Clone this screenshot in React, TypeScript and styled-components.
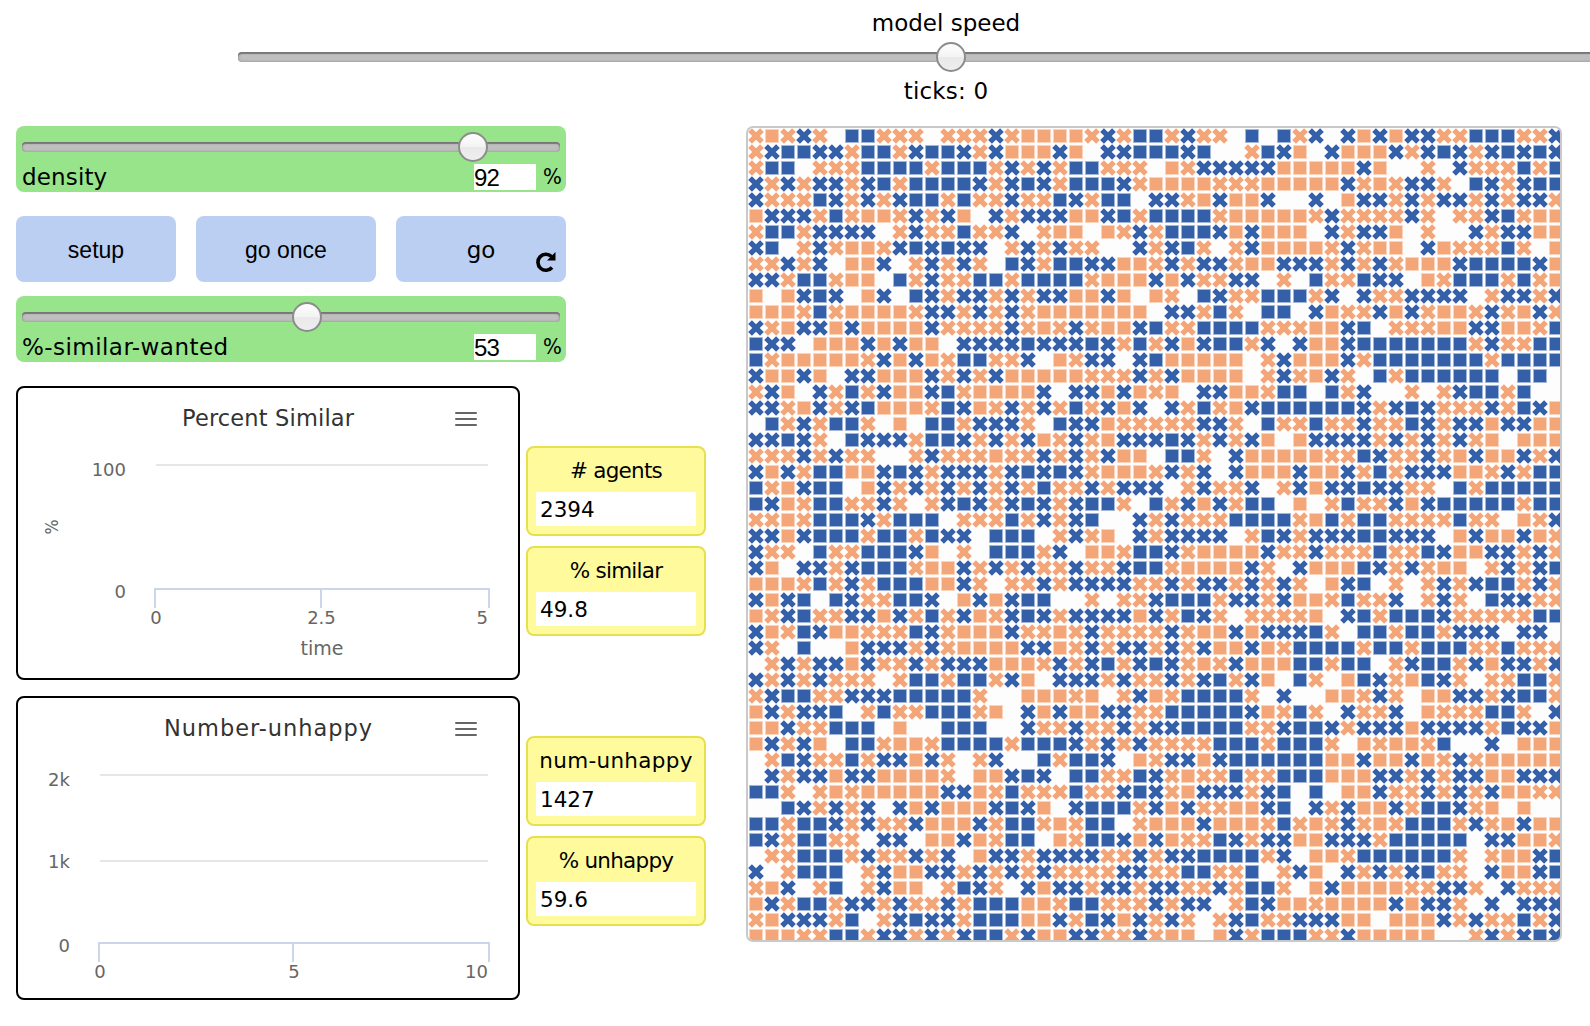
import React from "react";
import styled, { createGlobalStyle } from "styled-components";

const Global = createGlobalStyle`
  html, body { margin: 0; background: #fff; }
  body { width: 1590px; height: 1026px; overflow: hidden; }
  *, *::before { box-sizing: border-box; }
`;

const sans = `"DejaVu Sans", sans-serif`;

const Page = styled.main`
  width: 1590px;
  height: 1026px;
  overflow: hidden;
  font-family: ${sans};
  font-size: 23px;
  line-height: 30px;
  color: #000;
`;

const SpeedBar = styled.header`
  height: 126px;
  padding: 8px 0 0 238px;
`;

const SpeedText = styled.div<{ $ls: number }>`
  width: 1416px;
  height: 30px;
  text-align: center;
  letter-spacing: ${(p) => p.$ls}px;
`;

const SpeedTrackBox = styled.div`
  width: 1425px;
  padding: 14px 0;
  height: 38px;
`;

const Track = styled.div`
  height: 10px;
  border-radius: 4px;
  background: #bfbfbf;
  box-shadow: inset 0 2px 1px #777, inset 0 0 3px #8c8c8c;
  display: flex;
  align-items: center;
`;

const Knob = styled.span`
  flex: none;
  width: 30px;
  height: 30px;
  border-radius: 50%;
  border: 2px solid #8c8c8c;
  background: linear-gradient(#fdfdfd 0, #f3f3f3 50%, #e9e9e9 50%, #eee 100%);
`;

const KnobSpace = styled.span<{ $w: number }>`
  flex: none;
  width: ${(p) => p.$w}px;
`;

const Body = styled.div`
  display: flex;
  padding-left: 16px;
`;

const Side = styled.section`
  width: 730px;
`;

const SliderCard = styled.div`
  width: 550px;
  height: 66px;
  padding: 16px 6px 0;
  border-radius: 8px;
  background: #97e48a;
`;

const SliderRow = styled.div`
  display: flex;
  align-items: center;
  height: 26px;
  margin-top: 12px;
`;

const SliderName = styled.label<{ $ls: number }>`
  flex: 1;
  letter-spacing: ${(p) => p.$ls}px;
`;

const NumberField = styled.input`
  width: 62px;
  height: 26px;
  padding: 2px 0 0;
  border: 0;
  background: #fff;
  color: #000;
  font: 24px/24px "Liberation Sans", Arial, sans-serif;
  letter-spacing: -0.8px;
`;

const Unit = styled.span`
  width: 24px;
  padding-left: 7px;
  font-size: 22px;
  font-family: "DejaVu Sans Condensed", "DejaVu Sans", sans-serif;
  font-stretch: condensed;
`;

const Buttons = styled.div`
  display: flex;
  gap: 20px;
  width: 550px;
  margin: 24px 0 14px;
`;

const ModelButton = styled.button<{ $w: number; $plain?: boolean }>`
  position: relative;
  width: ${(p) => p.$w}px;
  height: 66px;
  padding: 2px 0 0;
  border: 0;
  border-radius: 8px;
  background: #bbcff3;
  color: #000;
  font-size: 23px;
  font-family: ${(p) => (p.$plain ? `"Liberation Sans", Arial, sans-serif` : sans)};
`;

const Repeat = styled.svg`
  position: absolute;
  right: 9px;
  bottom: 9px;
`;

const Output = styled.div`
  display: flex;
  align-items: flex-start;
  margin-top: 24px;
  gap: 6px;
`;

const Charts = styled.div`
  display: grid;
  gap: 16px;
`;

const ChartBox = styled.figure<{ $h: number }>`
  margin: 0;
  width: 504px;
  height: ${(p) => p.$h}px;
  border: 2px solid #000;
  border-radius: 8px;
  overflow: hidden;

  svg { display: block; font-family: ${sans}; }
`;

const Monitors = styled.div`
  padding-top: 60px;
`;

const MonitorPair = styled.div`
  display: grid;
  gap: 10px;
  margin-bottom: 100px;
`;

const MonitorBox = styled.div`
  width: 180px;
  height: 90px;
  padding: 8px 8px 0;
  border: 2px solid #e7e04e;
  border-radius: 8px;
  background: #fffb9d;
`;

const MonitorName = styled.div<{ $ls: number }>`
  height: 36px;
  line-height: 30px;
  margin: 0 -6px;
  font-size: 21.5px;
  text-align: center;
  white-space: nowrap;
  letter-spacing: ${(p) => p.$ls}px;
`;

const MonitorValue = styled.output`
  display: block;
  height: 34px;
  padding-left: 4px;
  font-size: 21.5px;
  line-height: 35px;
  background: #fff;
`;

const World = styled.div`
  width: 816px;
  height: 816px;
  border: 2px solid #c9c9c9;
  border-radius: 7px;
  overflow: hidden;
  background: #fdfdfd;

  svg { display: block; }
`;

// One string per patch row: x / X are crosses, s / S squares, capitals are blue.
const patches = [
  "xsxXx.SSxxx.xxxXx" + "ssssxXxSSxXxx.S.S" + "xX.XsXsXXxxSSSxxX",
  "xXSSXXxSSxXSSXxXs" + "ssXs.XXSSSXS..xSX" + "s.XsssXxXSXxXSXSX",
  "xSS.xxxSSSSxSSSxX" + "xXxSSxxx.sxXXXXXs" + "ssssXs..x.XxxxSxS",
  "XxXxXXxXSxSSSSXxX" + "SXxSSSXxssssxxxss" + "sssXxsxXXx.SXxXSS",
  "XxxxSXxXxXSSxSxxX" + "xxSXxSS.XXxsXssX." + ".X.sXXxXxXXxXxXXx",
  "sXXXxSxssxXxXs.Xx" + "XXXssXSxSSSSxssss" + "sxXxxxxXx.xxXSxss",
  "xSSxXXXX.xXxxSxxX" + ".xss.sxXxSSSXsXss" + "s.XxXXs.x..XxXXss",
  "XS.xXxssxXSXSXX.x" + "XxXxx..XxXSx.xXss" + "ssxXxss.XsxxxSx.s",
  "xxXxX.ssX.xXxXx.S" + "XxSSXXssxXxXXxssX" + "XXxXxXxsssXSSSSXs",
  "XXxSSxss.SxXxxSSx" + "SSSSxsssXsXxxXX.x" + ".SxxSXX.sxSSSxSxs",
  "s.sXSX.sX.SXxXXxX" + "xXXssXs.sx.SXxxSS" + "SxX.XxxXXXX.xXXxX",
  "sssxSxssssxXXxXxX" + "xsssssss.XXxSx.SS" + ".XsxxXsXxssxXxsXx",
  "XxsXXsXssssXxxxxX" + "xsxXxssXSxxSSSSxx" + "xssXS.xxxssXXssxS",
  "SXX.sssXsXss.XXXX" + "SXXXSXxSxXsXSSxX." + "XssXSSSSSSSxXxxSS",
  "SxsssssxXsXsxSSxx" + "X.sxXX.XSsssss.xX" + "sssXxSSSSSSSxSSSS",
  "XssXs.XXsssXxXxXs" + "ssssxxxXxXssss.xX" + "xsXx.SxSSSSSS.SS.",
  "xXs.XxSxXssXSxsss" + "sX.XXsXsxs.XXssxS" + "S.SxX..x.xXSSxS..",

  "XXxsXxXSsssxSXsxX" + "xXxSxXsX.XxSxsXSS" + "SSSSXxXSXxxxXxSXs",
  ".SxXxSSx.s.SSxXXX" + "x.SXXsxxxxxXXx.Sx" + "xSxxXxxSXxXXsXXss",
  "XXSXx.SXXXxSSXxXx" + "XsxXxsXXXSXxXxXs." + "sXXXXxXxXxXxs.sss",
  "xxxXxXxx..xXxxxsx" + "xXxXxXss.SSx.Xsss" + "ssxxSXxxXxsXssXxX",
  "XsXxSSssXSXxXXXxX" + "SXSXxsssxXxX.Xsss" + "XssXxSxXXXssxXxSS",
  "SxsXSS.sXxXxXxXxX" + "xSxxXxXXX.xXxxX.x" + "XsXXSXXxx.SxSSSSS",
  "SXsxSSxxXx.xXSXxX" + "SXxXSSx.SxXsXxSS." + "s.xSxxXsXSSSSSxSS",
  "xxsxSSSXxSSS.xxxS" + "xXxXS..XxXxxxSSSS" + "xsSxSSxxxxSxx.sxX",
  "XXsXSSSxSSxSXX.SS" + "S.xXxs.XxXXXX.xSX" + "xXXXSSXXX.sXssXsx",
  "Xxx.SxxSSSXs.x.SS" + "SxX.ssxSSXxssssXx" + "xXxxxSxxSXssXXxXx",
  "Xs.XXxXSSSxssXxXx" + "XxxXxxXSSxssssXx." + "XsssSXxXxss.xXxXS",
  "sssxSxXxSSSssXx.x" + "xXxXXXXxxXxXXxXxX" + "x.sXS.x.xXxXSSxXx",
  "XsXS.SXxxSSX.sXsX" + "SS..x.xxXSSSxXXxX" + "ssxSxxX.xXx.SXXxx",
  "sxXSxxXXsXxSxXsxX" + "SXxXXXXsXxSXx.xxx" + "xs.XSxSSSXxxxxxSS",
  "XsxSXssxxxSXxsssX" + "xxsxXxxxxXxssXsXX" + "XSx.SSxSSxXXX.XX.",
  "Xx.S..sXXXxXxssss" + "XXsxXxXXxXxXssXsx" + "SSSSxSSxSSSxxSxxx",
  ".xXxXXsXxxXxXXXss" + "sxXxXSxXSXxsxXsss" + "SSxSS.xXSSxXsXXxX",

  "XxXxXxxx.xSSxSSxX" + "s.XXXxXxxXxXSxXs." + "Sx.sSXxsSXx.xxSSx",
  "xXSSxxXXXSSSSSx.." + "sssxs.xXsxSSSSx.X" + "..ssxXx.ssXXxXSSx",
  "sXxXXS.xSxxSSSxs." + "XsXssXXxxSSSSSXsx" + "Sx.XxxX.sxxxSSx.X",
  "ssXxxSSS.s..SSS.." + "XxxXxxXxXXSSSSxxX" + "SSXxXXXsXXXXxSXXs",
  "sXxXs.SSxssxSSSSx" + "SSSXxXxXxxxxSSSxS" + "SSx.sxssxS..X.sss",
  ".xSXxxSxXXsXx.xX." + ".SxSSX.sxXXsXSSSS" + "SSssXssXsxXxsssss",
  ".XxXXsXXssssx.ssX" + "SX.SSxxSXxsxxSxxS" + "SSsssXXxXxXXssXXX",
  "SSx.xsxsssssXXsxS" + "xxxSxxXSXxsXXXxXS" + ".S.ssXxxXxXxXssxx",
  "..SXxXxX.XsXsssXS" + "Xs.XSSSxXsXxxssXS" + ".XxXssXxSSXxs.s..",
  "SSxSSXxXxxXsssXxS" + "SxsxSS.xsssXsssxS" + "xsxXxsxSSSxXxsXss",
  "SXxSSxx.XX.ssXsxS" + "S.sxSSXsXsxxSXxXX" + "ssXXXxSSSSS.XXssx",
  ".xxSSSxXxxXxX.sXX" + "xXXXXxxXxXXSSSSxX" + ".ssxSSSSSSx.xssXS",
  "X.xSSS.xXssXXxXxX" + "xXxxxxXXxxSSxxS.x" + "Xs.XxXxXSxx.XssXS",
  "xsX.xS.xXss.xSXx." + "XsXXxXXxXXxxXxSSx" + ".sXssssxxXXx.Xxxx",
  "sXxSSxXXxXxxXxSSS" + "ssxSSxxxXxXX.xSXs" + "sxssssXsXXx.X.XXX",
  "xsXXXxS.xXSXXxSSS" + "ssXxSXsXxXx.xXSxx" + "XXXss.sssXxXxxSxX",
  "sssxxSSxXXxXxXSSx" + "XssXXxxXxss.sXxSS" + "SxxXsssss..xXxXSX",
];

const shapes: Record<string, string> = { x: "cross-o", X: "cross-b", s: "square-o", S: "square-b" };
const tones = [
  { key: "o", fill: "#f4a679", edge: "#fad3bc" },
  { key: "b", fill: "#345fa9", edge: "#a3b6d8" },
];

function WorldView() {
  return (
    <World>
      <svg width="816" height="816" viewBox="0 0 816 816">
        <defs>
          {tones.map((t) => (
            <g key={t.key}>
              <rect id={`square-${t.key}`} x="1.5" y="1.5" width="13" height="13" fill={t.fill} stroke={t.edge} strokeWidth="1" />
              <path
                id={`cross-${t.key}`}
                d="M3.9 .2L8 4.3L12.1 .2L15.8 3.9L11.7 8L15.8 12.1L12.1 15.8L8 11.7L3.9 15.8L.2 12.1L4.3 8L.2 3.9Z"
                fill={t.fill}
              />
            </g>
          ))}
        </defs>
        {patches.map((row, r) =>
          row.split("").map((c, i) => (c === "." ? null : <use key={`${r}-${i}`} href={`#${shapes[c]}`} x={i * 16} y={r * 16} />)),
        )}
      </svg>
    </World>
  );
}

function Slider(p: { name: string; value: number; knob: number; ls: number }) {
  return (
    <SliderCard>
      <Track>
        <KnobSpace $w={p.knob} />
        <Knob />
      </Track>
      <SliderRow>
        <SliderName $ls={p.ls}>{p.name}</SliderName>
        <NumberField defaultValue={p.value} />
        <Unit>%</Unit>
      </SliderRow>
    </SliderCard>
  );
}

function Monitor(p: { name: string; value: string; ls?: number }) {
  return (
    <MonitorBox>
      <MonitorName $ls={p.ls ?? -0.75}>{p.name}</MonitorName>
      <MonitorValue>{p.value}</MonitorValue>
    </MonitorBox>
  );
}

type Label = { t: string; x: number; y: number; a?: "end" | "middle" };

function Chart(p: {
  title: string;
  titleWidth: number;
  height: number;
  left: number;
  mid: number;
  grid: number[];
  axis: number;
  labels: Label[];
  children?: React.ReactNode;
}) {
  return (
    <ChartBox $h={p.height}>
      <svg width="500" height={p.height - 4} fontSize="18" fill="#666">
        <text x="250" y="37.5" textAnchor="middle" fontSize="22.5" fill="#333" textLength={p.titleWidth}>
          {p.title}
        </text>
        <path d="M438 25H458M438 31H458M438 37H458" stroke="#666" strokeWidth="2" strokeLinecap="round" />
        {p.grid.map((y) => (
          <path key={y} d={`M${p.left + 1} ${y}H470`} stroke="#e6e6e6" strokeWidth="2" />
        ))}
        <path
          d={`M${p.left} ${p.axis + 19}V${p.axis}H471V${p.axis + 19}M${p.mid} ${p.axis}V${p.axis + 19}`}
          fill="none"
          stroke="#ccd6eb"
          strokeWidth="2"
        />
        {p.labels.map((l, i) => (
          <text key={i} x={l.x} y={l.y} textAnchor={l.a ?? "middle"}>
            {l.t}
          </text>
        ))}
        {p.children}
      </svg>
    </ChartBox>
  );
}

function Controls() {
  return (
    <>
      <Slider name="density" value={92} knob={436} ls={0.15} />
      <Buttons>
        <ModelButton $w={160} $plain>setup</ModelButton>
        <ModelButton $w={180} $plain>go once</ModelButton>
        <ModelButton $w={170}>
          go
          <Repeat width="22" height="22" viewBox="0 0 22 22">
            <path d="M17 16.5A8 8 0 1 1 16.5 5.5" fill="none" stroke="#000" strokeWidth="3.6" />
            <path d="M20.5 1V9.5H12Z" />
          </Repeat>
        </ModelButton>
      </Buttons>
      <Slider name="%-similar-wanted" value={53} knob={270} ls={0.45} />
    </>
  );
}

export default function App() {
  return (
    <Page>
      <Global />
      <SpeedBar>
        <SpeedText $ls={0}>model speed</SpeedText>
        <SpeedTrackBox>
          <Track>
            <KnobSpace $w={698} />
            <Knob />
          </Track>
        </SpeedTrackBox>
        <SpeedText $ls={0.2}>ticks: 0</SpeedText>
      </SpeedBar>
      <Body>
        <Side>
          <Controls />
          <Output>
            <Charts>
              <Chart
                title="Percent Similar"
                titleWidth={172}
                height={294}
                left={137}
                mid={303}
                grid={[77]}
                axis={201}
                labels={[
                  { t: "100", x: 108, y: 88, a: "end" },
                  { t: "0", x: 108, y: 210, a: "end" },
                  { t: "0", x: 138, y: 236 },
                  { t: "2.5", x: 303.5, y: 236 },
                  { t: "5", x: 470, y: 236, a: "end" },
                ]}
              >
                <text x="304" y="266.5" textAnchor="middle" fontSize="19" textLength="43">
                  time
                </text>
                <text transform="translate(40 139) rotate(-90)" textAnchor="middle" textLength="15" lengthAdjust="spacingAndGlyphs">
                  %
                </text>
              </Chart>
              <Chart
                title="Number-unhappy"
                titleWidth={208}
                height={304}
                left={81}
                mid={275}
                grid={[77, 163]}
                axis={245}
                labels={[
                  { t: "2k", x: 52, y: 87.5, a: "end" },
                  { t: "1k", x: 52, y: 170, a: "end" },
                  { t: "0", x: 52, y: 254, a: "end" },
                  { t: "0", x: 82, y: 280 },
                  { t: "5", x: 276, y: 280 },
                  { t: "10", x: 470, y: 280, a: "end" },
                ]}
              />
            </Charts>
            <Monitors>
              <MonitorPair>
                <Monitor name="# agents" value="2394" />
                <Monitor name="% similar" value="49.8" />
              </MonitorPair>
              <MonitorPair>
                <Monitor name="num-unhappy" value="1427" ls={0.3} />
                <Monitor name="% unhappy" value="59.6" />
              </MonitorPair>
            </Monitors>
          </Output>
        </Side>
        <WorldView />
      </Body>
    </Page>
  );
}
